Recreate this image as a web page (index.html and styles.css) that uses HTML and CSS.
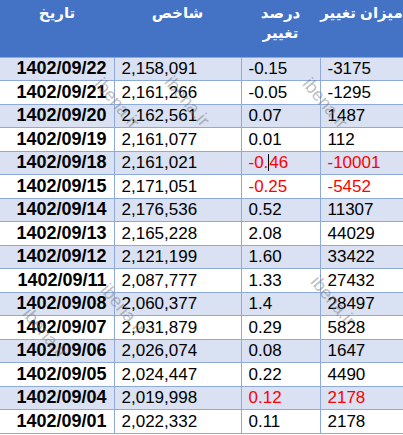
FILE: index.html
```html
<!DOCTYPE html>
<html lang="fa">
<head>
    <meta charset="UTF-8">
    <title>شاخص کل</title>
    <link rel="stylesheet" href="styles.css">
</head>
<body>
    <div class="sheet">
        <table class="index-table">
            <thead>
                <tr>
                    <th class="col-date">تاریخ</th>
                    <th class="col-index">شاخص</th>
                    <th class="col-pct">درصد<br>تغییر</th>
                    <th class="col-change">میزان تغییر</th>
                </tr>
            </thead>
            <tbody>
                <tr><td class="date">1402/09/22</td><td>2,158,091</td><td>-0.15</td><td>-3175</td></tr>
                <tr><td class="date">1402/09/21</td><td>2,161,266</td><td>-0.05</td><td>-1295</td></tr>
                <tr><td class="date">1402/09/20</td><td>2,162,561</td><td>0.07</td><td>1487</td></tr>
                <tr><td class="date">1402/09/19</td><td>2,161,077</td><td>0.01</td><td>112</td></tr>
                <tr><td class="date">1402/09/18</td><td>2,161,021</td><td class="neg">-0.<span class="caret"></span>46</td><td class="neg">-10001</td></tr>
                <tr><td class="date">1402/09/15</td><td>2,171,051</td><td class="neg">-0.25</td><td class="neg">-5452</td></tr>
                <tr><td class="date">1402/09/14</td><td>2,176,536</td><td>0.52</td><td>11307</td></tr>
                <tr><td class="date">1402/09/13</td><td>2,165,228</td><td>2.08</td><td>44029</td></tr>
                <tr><td class="date">1402/09/12</td><td>2,121,199</td><td>1.60</td><td>33422</td></tr>
                <tr><td class="date">1402/09/11</td><td>2,087,777</td><td>1.33</td><td>27432</td></tr>
                <tr><td class="date">1402/09/08</td><td>2,060,377</td><td>1.4</td><td>28497</td></tr>
                <tr><td class="date">1402/09/07</td><td>2,031,879</td><td>0.29</td><td>5828</td></tr>
                <tr><td class="date">1402/09/06</td><td>2,026,074</td><td>0.08</td><td>1647</td></tr>
                <tr><td class="date">1402/09/05</td><td>2,024,447</td><td>0.22</td><td>4490</td></tr>
                <tr><td class="date">1402/09/04</td><td>2,019,998</td><td class="neg">0.12</td><td class="neg">2178</td></tr>
                <tr><td class="date">1402/09/01</td><td>2,022,332</td><td>0.11</td><td>2178</td></tr>
            </tbody>
        </table>

        <!-- watermarks -->
        <span class="mark mark-1">ibena.ir</span>
        <span class="mark mark-2">ibena.ir</span>
        <span class="mark mark-3">ibena.ir</span>
        <span class="mark mark-4">ibena.ir</span>
        <span class="mark mark-5">ibena.ir</span>
        <span class="mark mark-6">ibena.ir</span>
    </div>
</body>
</html>
```

FILE: styles.css
```css
body {
    margin: 0;
    padding: 0;
    background-color: #fff;
    font-family: "Liberation Sans", "DejaVu Sans", sans-serif;
}

.sheet {
    position: relative;
    width: 403px;
    height: 435px;
    overflow: hidden;
}

.index-table {
    width: 403px;
    border-collapse: collapse;
    table-layout: fixed;
    font-size: 17px;
    color: #000;
}

.index-table th {
    background-color: #4472c4;
    color: #fff;
    font-weight: bold;
    font-size: 15px;
    line-height: 20px;
    height: 57px;
    padding: 3px 0 0;
    vertical-align: top;
    text-align: center;
    white-space: nowrap;
    box-sizing: border-box;
}

.col-date { width: 114px; }
.col-index { width: 127px; }
.col-pct { width: 79px; }
.col-change { width: 83px; }

.index-table td {
    height: 23.5px;
    padding: 0 0 0 7px;
    border: 1px solid #8ea9db;
    box-sizing: border-box;
    line-height: 21px;
    white-space: nowrap;
}

.index-table td:first-child { border-left: none; }
.index-table td:last-child { border-right: none; }

.index-table tbody tr:nth-child(odd) td {
    background-color: #d9e1f2;
}

.index-table td.date {
    font-weight: bold;
    font-size: 18px;
    text-align: right;
    padding: 0 7px 0 0;
}

.neg {
    color: #ff0000;
}

.caret {
    display: inline-block;
    width: 0;
    height: 17px;
    border-left: 1px solid #000;
    vertical-align: -3px;
}

.mark {
    position: absolute;
    font-size: 18px;
    color: rgba(110, 110, 110, 0.45);
    transform: rotate(50deg);
    transform-origin: left top;
    pointer-events: none;
}

.mark-1 { left: 106px; top: 74px; }
.mark-2 { left: 176px; top: 72px; }
.mark-3 { left: 314px; top: 74px; }
.mark-4 { left: 112px; top: 280px; }
.mark-5 { left: 322px; top: 272px; }
.mark-6 { left: 34px; top: 304px; }
```
